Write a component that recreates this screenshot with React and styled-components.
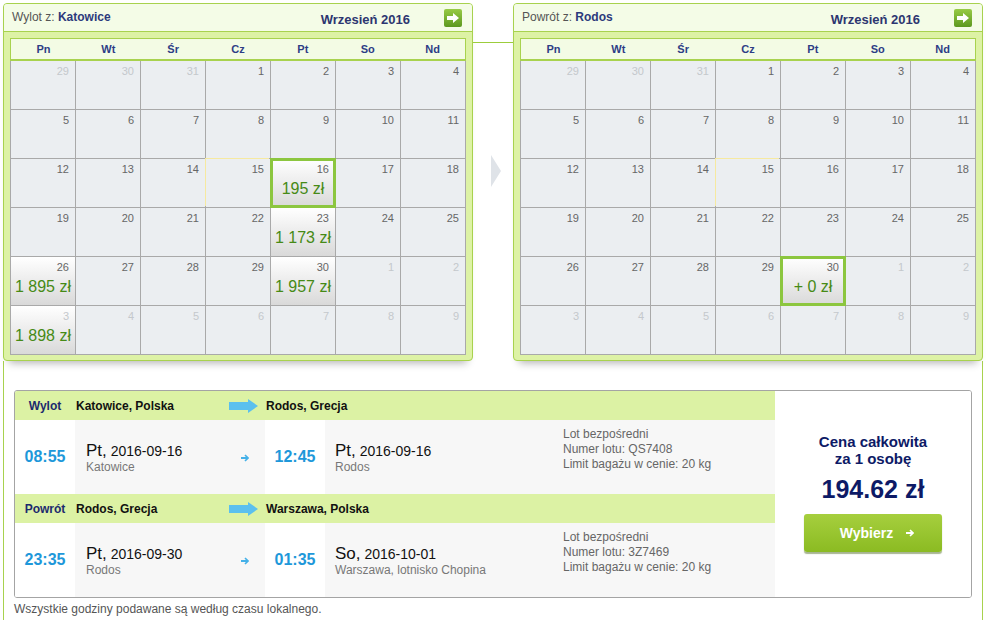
import React from "react";
import styled, { createGlobalStyle } from "styled-components";

const GREEN = "#a8d24e";

const GlobalStyle = createGlobalStyle`
  body {
    margin: 0;
    background: #fff;
    font-family: "Liberation Sans", Arial, sans-serif;
  }
`;

const WEEKDAYS = ["Pn", "Wt", "Śr", "Cz", "Pt", "So", "Nd"];

// September 2016 starts on a Thursday, weeks start on Monday
const buildDays = () => {
  const days = [];
  [29, 30, 31].forEach((d) => days.push({ key: `8-${d}`, day: d, muted: true }));
  for (let d = 1; d <= 30; d++) days.push({ key: `9-${d}`, day: d });
  for (let d = 1; d <= 9; d++) days.push({ key: `10-${d}`, day: d, muted: true });
  return days;
};

const calendars = [
  {
    label: "Wylot z:",
    city: "Katowice",
    prices: {
      "9-16": "195 zł",
      "9-23": "1 173 zł",
      "9-26": "1 895 zł",
      "9-30": "1 957 zł",
      "10-3": "1 898 zł",
    },
    selected: "9-16",
  },
  {
    label: "Powrót z:",
    city: "Rodos",
    prices: { "9-30": "+ 0 zł" },
    selected: "9-30",
  },
];

const legs = [
  {
    label: "Wylot",
    from: "Katowice, Polska",
    to: "Rodos, Grecja",
    depTime: "08:55",
    depDay: "Pt,",
    depDate: "2016-09-16",
    depPlace: "Katowice",
    arrTime: "12:45",
    arrDay: "Pt,",
    arrDate: "2016-09-16",
    arrPlace: "Rodos",
    flight: "QS7408",
  },
  {
    label: "Powrót",
    from: "Rodos, Grecja",
    to: "Warszawa, Polska",
    depTime: "23:35",
    depDay: "Pt,",
    depDate: "2016-09-30",
    depPlace: "Rodos",
    arrTime: "01:35",
    arrDay: "So,",
    arrDate: "2016-10-01",
    arrPlace: "Warszawa, lotnisko Chopina",
    flight: "3Z7469",
  },
];

const NavArrow = () => (
  <svg width="12" height="10" viewBox="0 0 12 10">
    <path d="M0 3h6V0l6 5-6 5V7H0z" fill="#fff" />
  </svg>
);

const RouteArrow = () => (
  <svg width="29" height="14" viewBox="0 0 29 14">
    <path d="M0 3h19V0l10 7-10 7v-3H0z" fill="#5bc0ee" />
  </svg>
);

const SmallArrow = ({ color = "#45b1e8" }) => (
  <svg width="8" height="8" viewBox="0 0 8 8">
    <path d="M0 4h6.5" stroke={color} strokeWidth="1.8" />
    <path d="M4 1l3 3-3 3" stroke={color} strokeWidth="1.6" fill="none" />
  </svg>
);

const Calendar = ({ label, city, prices, selected }) => (
  <Panel>
    <PanelHeader>
      <Title>
        {label} <b>{city}</b>
      </Title>
      <Month>Wrzesień 2016</Month>
      <NextButton>
        <NavArrow />
      </NextButton>
    </PanelHeader>
    <PanelBody>
      <Weekdays>
        {WEEKDAYS.map((w) => (
          <Weekday key={w}>{w}</Weekday>
        ))}
      </Weekdays>
      <DayGrid>
        {buildDays().map((d) => (
          <DayCell
            key={d.key}
            $price={!!prices[d.key]}
            $selected={d.key === selected}
            $today={d.key === "9-15"}
          >
            <DayNum $muted={d.muted}>{d.day}</DayNum>
            {prices[d.key] && <Price>{prices[d.key]}</Price>}
          </DayCell>
        ))}
      </DayGrid>
    </PanelBody>
  </Panel>
);

const Leg = ({ leg }) => (
  <>
    <LegHeader>
      <LegLabel>{leg.label}</LegLabel>
      <From>
        {leg.from}
        <RouteArrow />
      </From>
      <To>{leg.to}</To>
    </LegHeader>
    <LegBody>
      <Time>{leg.depTime}</Time>
      <DepStop>
        <Stop>
          <DateLine>
            <Day>{leg.depDay}</Day> {leg.depDate}
          </DateLine>
          <Place>{leg.depPlace}</Place>
        </Stop>
        <SmallArrow />
      </DepStop>
      <Time>{leg.arrTime}</Time>
      <ArrStop>
        <Stop>
          <DateLine>
            <Day>{leg.arrDay}</Day> {leg.arrDate}
          </DateLine>
          <Place>{leg.arrPlace}</Place>
        </Stop>
      </ArrStop>
      <Info>
        Lot bezpośredni
        <br />
        Numer lotu: {leg.flight}
        <br />
        Limit bagażu w cenie: 20 kg
      </Info>
    </LegBody>
  </>
);

const App = () => (
  <>
    <GlobalStyle />
    <Page>
      <CalendarRow>
        <Calendar {...calendars[0]} />
        <Connector>
          <Link />
          <Chevron />
        </Connector>
        <Calendar {...calendars[1]} />
      </CalendarRow>
      <Lower>
        <Summary>
          <Flights>
            {legs.map((leg) => (
              <Leg key={leg.label} leg={leg} />
            ))}
          </Flights>
          <PriceBox>
            <PriceLabel>
              Cena całkowita
              <br />
              za 1 osobę
            </PriceLabel>
            <Total>194.62 zł</Total>
            <ChooseButton>
              Wybierz
              <SmallArrow color="#fff" />
            </ChooseButton>
          </PriceBox>
        </Summary>
        <Note>Wszystkie godziny podawane są według czasu lokalnego.</Note>
      </Lower>
    </Page>
  </>
);

const Page = styled.div`
  width: 980px;
  padding: 3px 0 0 3px;
`;

const CalendarRow = styled.div`
  display: flex;
`;

const Panel = styled.section`
  width: 470px;
  box-sizing: border-box;
  border: 1px solid ${GREEN};
  border-radius: 4px;
  background: #ddf2a5;
  box-shadow: 0 8px 8px -6px rgba(0, 0, 0, 0.3);
`;

const PanelHeader = styled.div`
  display: flex;
  align-items: flex-start;
  height: 27px;
  padding: 0 10px 0 8px;
  background: #f4fce7;
  border-bottom: 1px solid ${GREEN};
  border-radius: 3px 3px 0 0;
`;

const Title = styled.div`
  margin-top: 6px;
  font-size: 12px;
  line-height: 14px;
  color: #555;

  b {
    color: #2c3a7c;
  }
`;

const Month = styled.div`
  margin: 8px 34px 0 auto;
  font-size: 13px;
  line-height: 15px;
  font-weight: bold;
  color: #2c3670;
`;

const NextButton = styled.button`
  display: flex;
  align-items: center;
  justify-content: center;
  width: 18px;
  height: 18px;
  margin-top: 5px;
  padding: 0;
  border: 0;
  border-radius: 2px;
  background: linear-gradient(#98cb46, #5c981f);
`;

const PanelBody = styled.div`
  padding: 6px 6px 5px;
`;

const Weekdays = styled.div`
  display: grid;
  grid-template-columns: repeat(7, 1fr);
  height: 20px;
  border: 1px solid ${GREEN};
  border-bottom-width: 2px;
  background: #f3fbe4;
`;

const Weekday = styled.div`
  text-align: center;
  font-size: 11px;
  line-height: 20px;
  font-weight: bold;
  color: #2d3d86;
`;

const DayGrid = styled.div`
  display: grid;
  grid-template-columns: repeat(7, 64px);
  grid-auto-rows: 48px;
  gap: 1px;
  padding: 0 1px 1px;
  background: #a9a9a9;
`;

const DayCell = styled.div`
  background: ${(p) => (p.$price ? "linear-gradient(#ffffff, #d9d9d9)" : "#ebeef1")};
  box-shadow: ${(p) =>
    p.$selected
      ? "0 0 0 1px #8cc63f, inset 0 0 0 2px #8cc63f"
      : p.$today
      ? "-1px -1px 0 0 #f6e9a0"
      : "none"};
`;

const DayNum = styled.div`
  padding: 3px 6px 0 0;
  text-align: right;
  font-size: 11px;
  line-height: 14px;
  color: ${(p) => (p.$muted ? "#c4c8cc" : "#666")};
`;

const Price = styled.div`
  margin-top: 3px;
  text-align: center;
  font-size: 16px;
  line-height: 20px;
  color: #468a16;
`;

const Connector = styled.div`
  display: flex;
  flex-direction: column;
  width: 40px;
`;

const Link = styled.div`
  height: 1px;
  margin-top: 39px;
  background: #9ccd3c;
`;

const Chevron = styled.div`
  width: 0;
  height: 0;
  margin: 112px 0 0 18px;
  border-top: 16px solid transparent;
  border-bottom: 16px solid transparent;
  border-left: 10px solid #dfe3e8;
`;

const Lower = styled.div`
  width: 980px;
  box-sizing: border-box;
  padding: 29px 10px 20px;
  border-left: 1px solid ${GREEN};
  border-right: 1px solid ${GREEN};
`;

const Summary = styled.div`
  display: flex;
  border: 1px solid #a4a4a4;
  border-radius: 3px;
  overflow: hidden;
`;

const Flights = styled.div`
  width: 760px;
`;

const LegHeader = styled.div`
  display: flex;
  align-items: center;
  height: 29px;
  background: #dcf2a4;
  font-size: 12px;
  font-weight: bold;
  color: #111;
`;

const LegLabel = styled.div`
  width: 60px;
  text-align: center;
  color: #1c2a6e;
`;

const From = styled.div`
  display: flex;
  align-items: center;
  justify-content: space-between;
  width: 190px;
  box-sizing: border-box;
  padding: 0 7px 0 1px;
`;

const To = styled.div`
  padding-left: 1px;
`;

const LegBody = styled.div`
  display: flex;
  height: 74px;
  background: #f7f7f7;
`;

const Time = styled.div`
  display: flex;
  align-items: center;
  justify-content: center;
  width: 60px;
  background: #fff;
  font-size: 16px;
  font-weight: bold;
  color: #1e98da;
`;

const DepStop = styled.div`
  display: flex;
  align-items: center;
  justify-content: space-between;
  width: 190px;
  box-sizing: border-box;
  padding: 2px 16px 0 11px;
`;

const ArrStop = styled.div`
  display: flex;
  align-items: center;
  width: 238px;
  box-sizing: border-box;
  padding: 2px 0 0 10px;
`;

const Stop = styled.div``;

const DateLine = styled.div`
  font-size: 14px;
  line-height: 18px;
  color: #111;
`;

const Day = styled.span`
  font-size: 17px;
`;

const Place = styled.div`
  font-size: 12px;
  line-height: 14px;
  color: #777;
`;

const Info = styled.div`
  padding-top: 7px;
  font-size: 12px;
  line-height: 15px;
  color: #666;
`;

const PriceBox = styled.div`
  display: flex;
  flex-direction: column;
  align-items: center;
  flex: 1;
  padding-top: 42px;
  background: #fff;
  color: #0d1a66;
  font-weight: bold;
`;

const PriceLabel = styled.div`
  text-align: center;
  font-size: 15px;
  line-height: 17px;
`;

const Total = styled.div`
  margin-top: 8px;
  font-size: 25px;
  line-height: 28px;
`;

const ChooseButton = styled.button`
  display: flex;
  align-items: center;
  justify-content: center;
  gap: 13px;
  width: 138px;
  height: 38px;
  margin-top: 11px;
  padding: 0 0 0 8px;
  border: 0;
  border-radius: 3px;
  background: linear-gradient(#a6cf3e, #8bbb22);
  box-shadow: 0 2px 1px rgba(60, 90, 10, 0.45);
  font-family: inherit;
  font-size: 14px;
  font-weight: bold;
  color: #fff;
`;

const Note = styled.div`
  margin-top: 4px;
  font-size: 12px;
  line-height: 15px;
  color: #555;
`;

export default App;
